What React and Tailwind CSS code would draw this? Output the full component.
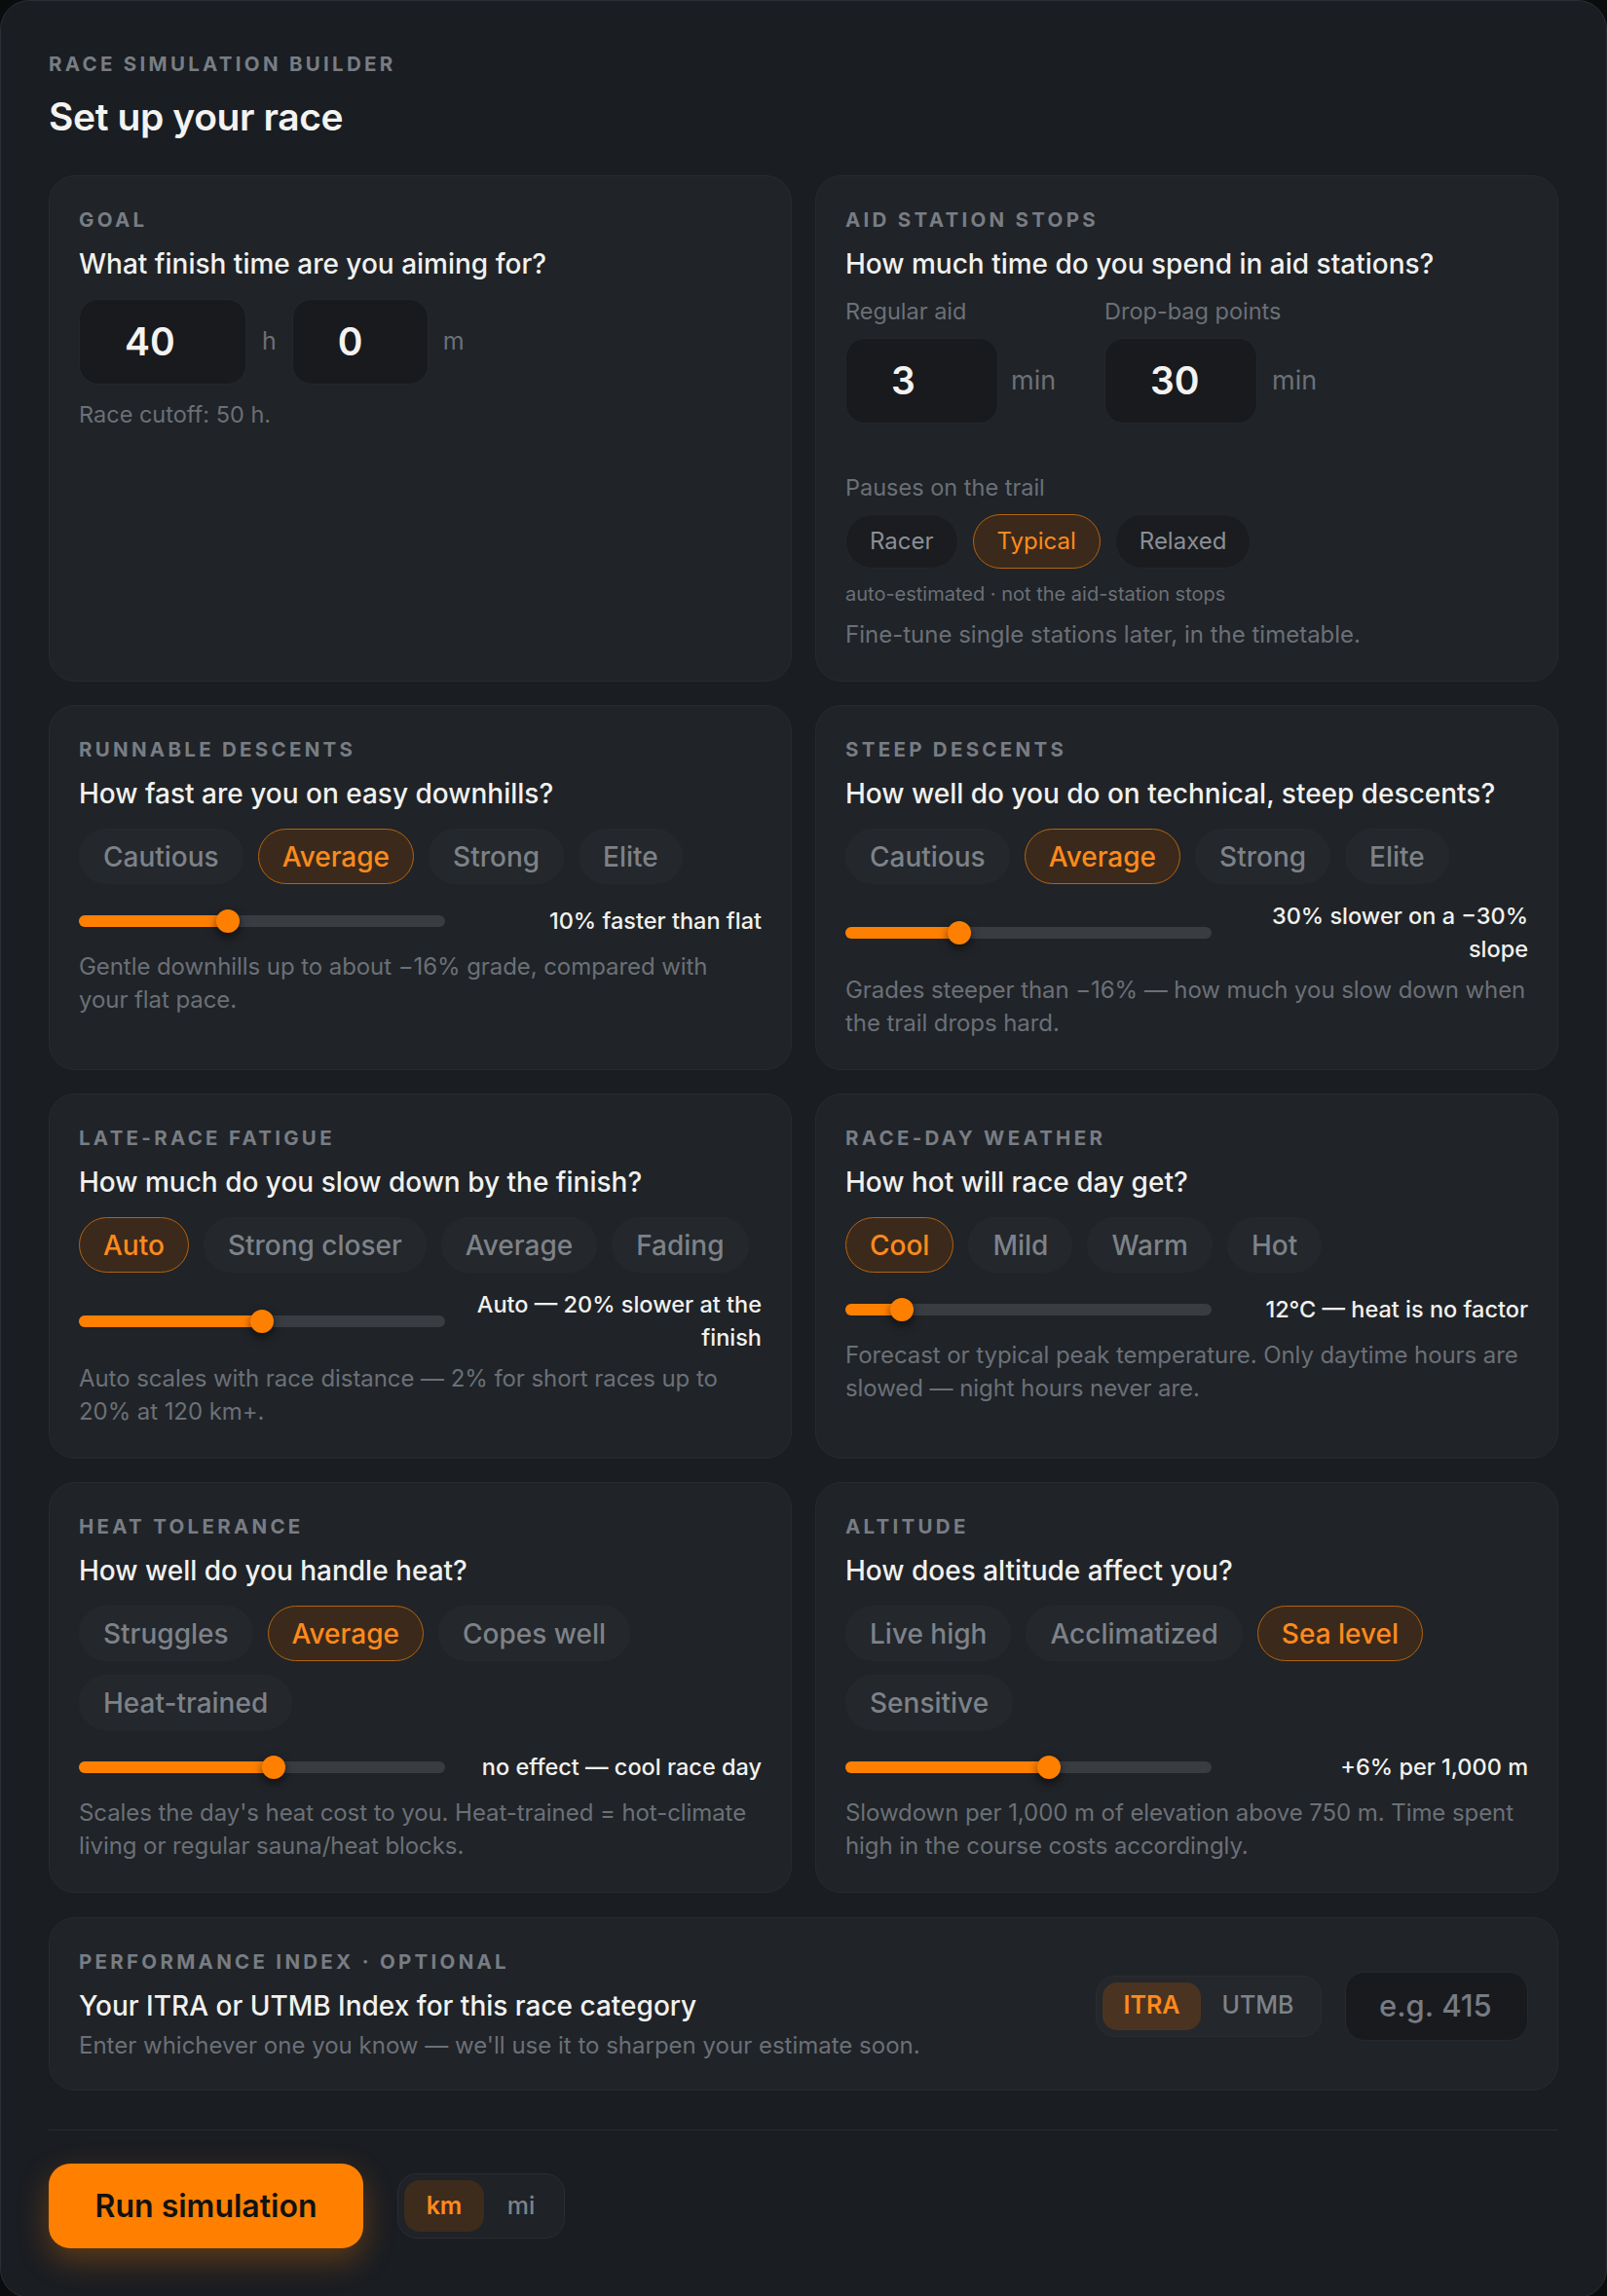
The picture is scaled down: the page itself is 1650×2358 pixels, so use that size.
import React from 'react';

const font = { fontFamily: 'Inter, "Noto Sans", sans-serif' };

const Card = ({ label, question, children, pb = 'pb-[30px]' }) => (
  <div className={`rounded-[27px] border border-[#272a2f] bg-[#202327] px-[30px] pt-[32px] ${pb}`}>
    <div className="text-[20.5px] font-bold uppercase leading-[26px] tracking-[0.16em] text-[#787d84]">{label}</div>
    <div className="mt-[14px] text-[28px] font-medium leading-[36px] text-[#f1f1ef]">{question}</div>
    {children}
  </div>
);

const Pill = ({ children, active }) => (
  <div
    className={`flex h-[57px] items-center rounded-full border-[1.5px] px-[24px] text-[28px] font-medium ${
      active ? 'border-[#b5620f] bg-[#3b2a1b] text-[#ff8a1c]' : 'border-[#26292d] bg-[#24272b] text-[#7d8289]'
    }`}
  >
    {children}
  </div>
);

const Pills = ({ options, active }) => (
  <div className="mt-[18px] flex flex-wrap gap-x-[15px] gap-y-[14px]">
    {options.map((o) => (
      <Pill key={o} active={o === active}>
        {o}
      </Pill>
    ))}
  </div>
);

const Slider = ({ pos, text }) => (
  <div className="mt-[16px] flex items-center gap-[22px]">
    <div className="relative flex h-[44px] w-[376px] shrink-0 items-center">
      <div className="h-[12px] w-full rounded-full bg-[#393c41]" />
      <div className="absolute left-0 h-[12px] rounded-full bg-[#ff8000]" style={{ width: pos }} />
      <div
        className="absolute h-[24px] w-[24px] rounded-full bg-[#ff8000] shadow-[0_4px_10px_rgba(0,0,0,0.55)]"
        style={{ left: pos - 12 }}
      />
    </div>
    <div className="flex-1 text-right text-[23.5px] font-medium leading-[34px] text-[#f1f1ef]">{text}</div>
  </div>
);

const Desc = ({ children }) => (
  <p className="mt-[8px] text-[24px] leading-[34px] tracking-[-0.003em] text-[#6b7077]">{children}</p>
);

const NumBox = ({ value, w }) => (
  <div
    className="flex h-[88px] items-center rounded-[20px] border border-[#24272b] bg-[#181a1e] pl-[46px] text-[39px] font-semibold text-[#f3f3f1]"
    style={{ width: w }}
  >
    {value}
  </div>
);

const SmallPill = ({ children, active }) => (
  <div
    className={`flex h-[56px] items-center rounded-full border-[1.5px] px-[24px] text-[24px] ${
      active ? 'border-[#b5620f] bg-[#3b2a1b] text-[#ff8a1c]' : 'border-[#23262a] bg-[#1a1c20] text-[#8a8f96]'
    }`}
  >
    {children}
  </div>
);

export default function App() {
  return (
    <div className="min-h-[2358px] w-[1650px] bg-[#0b0c0e]" style={font}>
      <div className="min-h-[2358px] rounded-[30px] border border-[#2b2e34] bg-[#1a1d22] px-[49px] pt-[52px] pb-[50px]">
        <div className="text-[20.5px] font-bold uppercase leading-[26px] tracking-[0.16em] text-[#787d84]">
          Race simulation builder
        </div>
        <h1 className="mt-[19px] text-[39px] font-semibold leading-[44px] tracking-[-0.01em] text-[#f3f3f1]">
          Set up your race
        </h1>

        <div className="mt-[38px] grid grid-cols-2 gap-[24px]">
          <Card label="Goal" question="What finish time are you aiming for?">
            <div className="mt-[18px] flex items-center">
              <NumBox value="40" w={172} />
              <span className="ml-[16px] mr-[16px] text-[25px] text-[#6b7077]">h</span>
              <NumBox value="0" w={140} />
              <span className="ml-[15px] text-[25px] text-[#6b7077]">m</span>
            </div>
            <p className="mt-[14px] text-[23.5px] leading-[34px] text-[#6b7077]">Race cutoff: 50 h.</p>
          </Card>

          <Card label="Aid station stops" question="How much time do you spend in aid stations?" pb="pb-[32px]">
            <div className="mt-[16px] flex">
              <div className="w-[266px]">
                <div className="text-[23.5px] leading-[30px] text-[#6b7077]">Regular aid</div>
                <div className="mt-[12px] flex items-center">
                  <NumBox value="3" w={157} />
                  <span className="ml-[13px] text-[27px] text-[#6b7077]">min</span>
                </div>
              </div>
              <div>
                <div className="text-[23.5px] leading-[30px] text-[#6b7077]">Drop-bag points</div>
                <div className="mt-[12px] flex items-center">
                  <NumBox value="30" w={157} />
                  <span className="ml-[15px] text-[27px] text-[#6b7077]">min</span>
                </div>
              </div>
            </div>
            <div className="mt-[51px] text-[23.5px] leading-[30px] text-[#6b7077]">Pauses on the trail</div>
            <div className="mt-[12px] flex gap-[15px]">
              <SmallPill>Racer</SmallPill>
              <SmallPill active>Typical</SmallPill>
              <SmallPill>Relaxed</SmallPill>
            </div>
            <div className="mt-[13px] text-[20px] leading-[26px] text-[#6b7077]">
              auto-estimated · not the aid-station stops
            </div>
            <div className="mt-[14px] text-[24px] leading-[30px] text-[#6b7077]">
              Fine-tune single stations later, in the timetable.
            </div>
          </Card>

          <Card label="Runnable descents" question="How fast are you on easy downhills?">
            <Pills options={['Cautious', 'Average', 'Strong', 'Elite']} active="Average" />
            <Slider pos={153} text="10% faster than flat" />
            <Desc>Gentle downhills up to about −16% grade, compared with your flat pace.</Desc>
          </Card>

          <Card label="Steep descents" question="How well do you do on technical, steep descents?">
            <Pills options={['Cautious', 'Average', 'Strong', 'Elite']} active="Average" />
            <Slider pos={117} text="30% slower on a −30% slope" />
            <Desc>Grades steeper than −16% — how much you slow down when the trail drops hard.</Desc>
          </Card>

          <Card label="Late-race fatigue" question="How much do you slow down by the finish?">
            <Pills options={['Auto', 'Strong closer', 'Average', 'Fading']} active="Auto" />
            <Slider pos={188} text="Auto — 20% slower at the finish" />
            <Desc>Auto scales with race distance — 2% for short races up to 20% at 120 km+.</Desc>
          </Card>

          <Card label="Race-day weather" question="How hot will race day get?">
            <Pills options={['Cool', 'Mild', 'Warm', 'Hot']} active="Cool" />
            <Slider pos={58} text="12°C — heat is no factor" />
            <Desc>Forecast or typical peak temperature. Only daytime hours are slowed — night hours never are.</Desc>
          </Card>

          <Card label="Heat tolerance" question="How well do you handle heat?">
            <Pills options={['Struggles', 'Average', 'Copes well', 'Heat-trained']} active="Average" />
            <Slider pos={200} text="no effect — cool race day" />
            <Desc>Scales the day's heat cost to you. Heat-trained = hot-climate living or regular sauna/heat blocks.</Desc>
          </Card>

          <Card label="Altitude" question="How does altitude affect you?">
            <Pills options={['Live high', 'Acclimatized', 'Sea level', 'Sensitive']} active="Sea level" />
            <Slider pos={209} text="+6% per 1,000 m" />
            <Desc>Slowdown per 1,000 m of elevation above 750 m. Time spent high in the course costs accordingly.</Desc>
          </Card>
        </div>

        <div className="mt-[25px] flex items-center justify-between rounded-[27px] border border-[#272a2f] bg-[#202327] px-[30px] pt-[32px] pb-[28px]">
          <div>
            <div className="text-[20.5px] font-bold uppercase leading-[26px] tracking-[0.16em] text-[#787d84]">
              Performance index · optional
            </div>
            <div className="mt-[14px] text-[28px] font-medium leading-[36px] text-[#f1f1ef]">
              Your ITRA or UTMB Index for this race category
            </div>
            <div className="mt-[6px] text-[24px] leading-[34px] text-[#6b7077]">
              Enter whichever one you know — we'll use it to sharpen your estimate soon.
            </div>
          </div>
          <div className="flex items-center gap-[24px]">
            <div className="flex h-[63px] w-[232px] rounded-[20px] border border-[#2a2d31] bg-[#24272b] p-[6px]">
              <div className="flex h-full w-[101px] items-center justify-center rounded-[15px] bg-[#4a3421] text-[25px] font-semibold text-[#ff8a1c]">
                ITRA
              </div>
              <div className="flex flex-1 items-center justify-center text-[25px] font-medium text-[#7d8289]">UTMB</div>
            </div>
            <div className="flex h-[71px] w-[188px] items-center rounded-[20px] border border-[#26292d] bg-[#181a1e] pl-[34px] text-[31px] font-medium text-[#777b82]">
              e.g. 415
            </div>
          </div>
        </div>

        <div className="mt-[40px] h-px bg-[#2a2d32]" />

        <div className="mt-[34px] flex items-center gap-[35px]">
          <button className="h-[87px] w-[323px] rounded-[22px] bg-[#ff8000] text-[32px] font-semibold text-[#121212] shadow-[0_12px_32px_rgba(255,128,0,0.3)]">
            Run simulation
          </button>
          <div className="flex h-[67px] w-[172px] rounded-[20px] border border-[#2a2d32] bg-[#1f2226] p-[6px]">
            <div className="flex h-full w-[82px] items-center justify-center rounded-[16px] bg-[#3d2b1c] text-[25px] font-semibold text-[#ff8a1c]">
              km
            </div>
            <div className="flex flex-1 items-center justify-center text-[25px] font-medium text-[#7d8289]">mi</div>
          </div>
        </div>
      </div>
    </div>
  );
}
